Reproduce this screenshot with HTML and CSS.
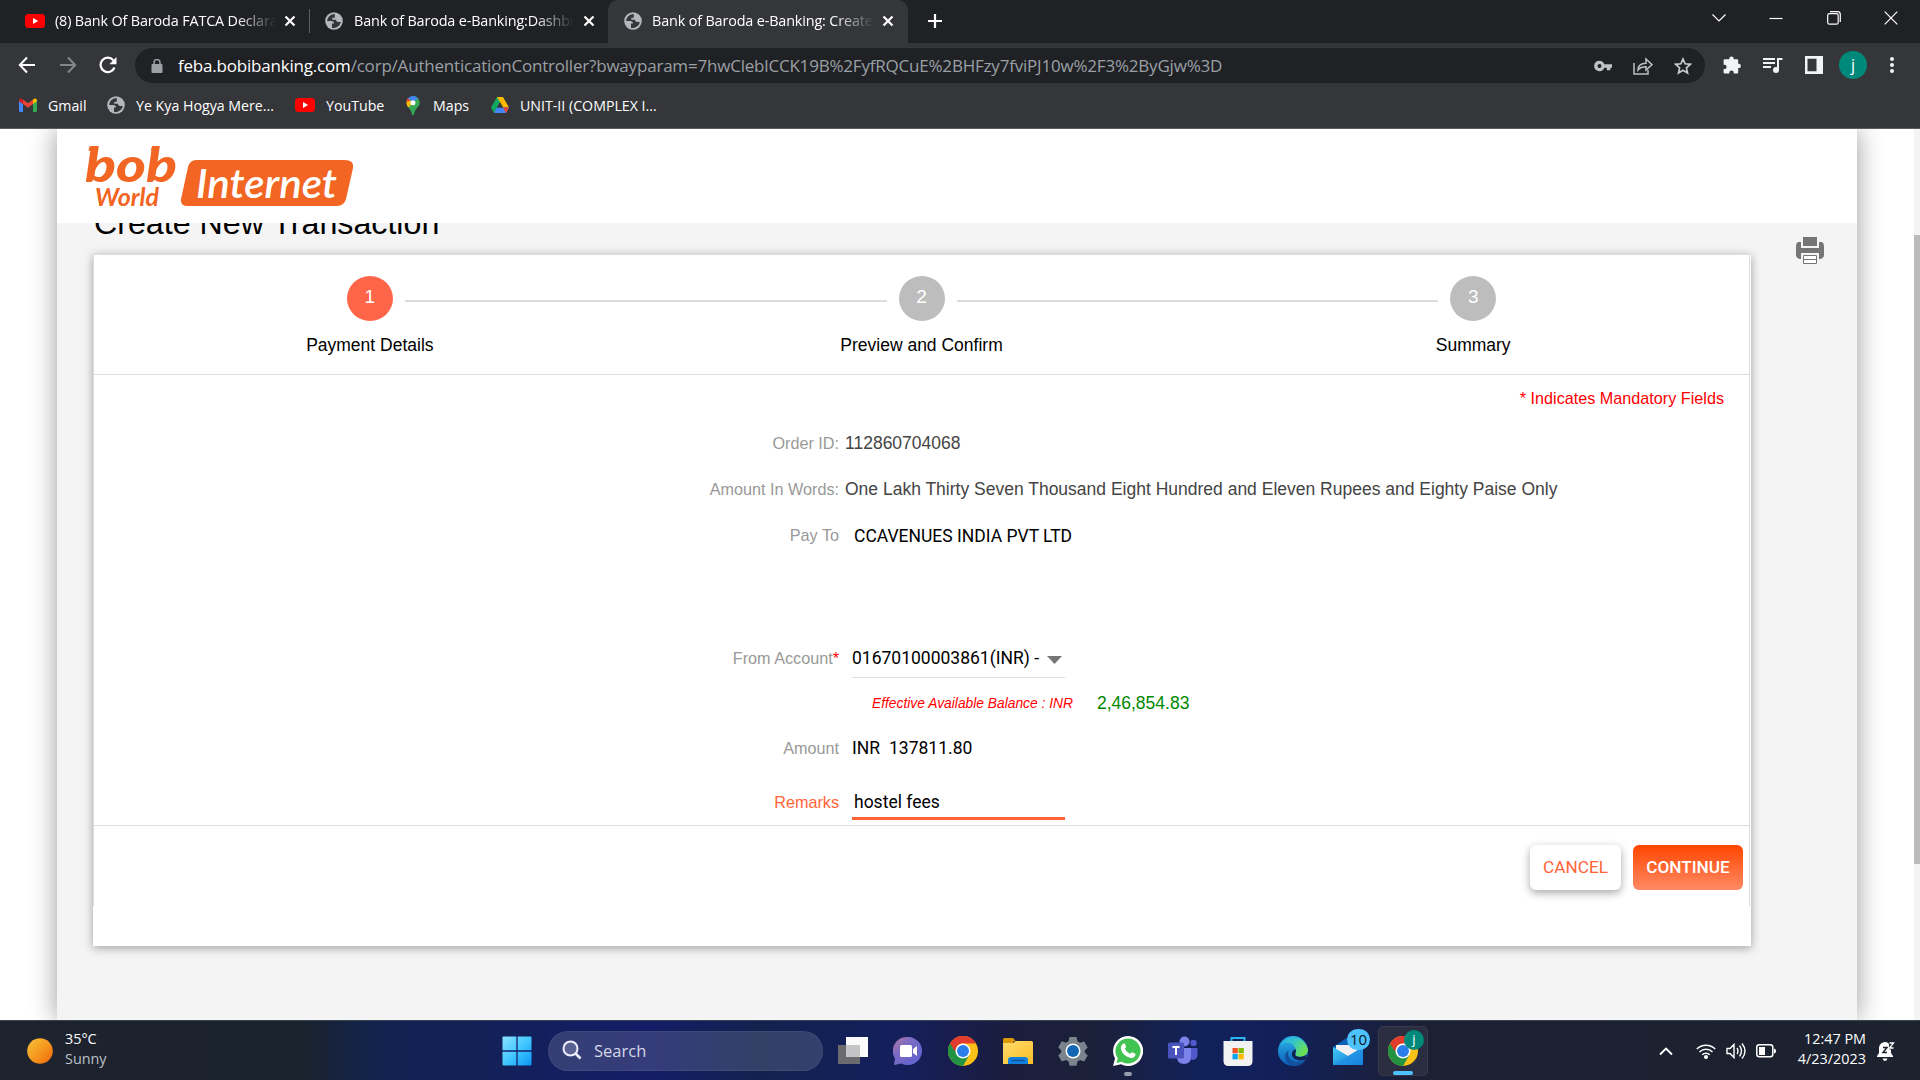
FILE: index.html
```html
<!DOCTYPE html>
<html lang="en">
<head>
<meta charset="utf-8">
<title>Bank of Baroda e-Banking: Create New Transaction</title>
<link rel="stylesheet" href="styles.css">
</head>
<body>
<svg class="defs" width="0" height="0" aria-hidden="true">
  <defs>
    <linearGradient id="sunFill" x1="0" y1="0" x2="1" y2="1"><stop offset="0" stop-color="#f5c33b"/><stop offset=".5" stop-color="#f59a1f"/><stop offset="1" stop-color="#f0640c"/></linearGradient>
    <linearGradient id="winFill" x1="0" y1="0" x2="1" y2="1"><stop offset="0" stop-color="#8ce2ff"/><stop offset=".5" stop-color="#43c8ff"/><stop offset="1" stop-color="#0a94f5"/></linearGradient>
    <linearGradient id="chatFill" x1="0" y1="0" x2="1" y2="1"><stop offset="0" stop-color="#b87a9c"/><stop offset=".35" stop-color="#7d6cc4"/><stop offset="1" stop-color="#5b5fd0"/></linearGradient>
    <linearGradient id="folderFill" x1="0" y1="0" x2="1" y2="1"><stop offset="0" stop-color="#ffdc6b"/><stop offset="1" stop-color="#fcbd28"/></linearGradient>
    <linearGradient id="edgeBlue" x1="0" y1="0" x2="0" y2="1"><stop offset="0" stop-color="#2cb5ea"/><stop offset="1" stop-color="#0c5cb8"/></linearGradient>
    <linearGradient id="edgeGreen" x1="0" y1="0" x2="1" y2=".5"><stop offset="0" stop-color="#2aa9e8"/><stop offset=".5" stop-color="#35c6cb"/><stop offset="1" stop-color="#6be052"/></linearGradient>
    <linearGradient id="mailFill" x1="0" y1="0" x2="1" y2="1"><stop offset="0" stop-color="#41cbf7"/><stop offset="1" stop-color="#1477d4"/></linearGradient>
    <symbol id="globe" viewBox="0 0 18 18"><circle cx="9" cy="9" r="8.800" fill="#b3b8bd"/><path d="M9.800 2c-4 .2-7.400 3-7.600 7h4.300c1.500 0 2.500 1 2.500 2.500h-2v4.400c4 .8 8-1.800 8.800-5.900h-2.600c-1.400 0-2.200-.9-2.200-2.200H7.300V5.700h2.500z" fill="#35363a"/></symbol>
    <symbol id="youtube" viewBox="0 0 20 14"><rect width="20" height="14" rx="3.500" fill="#f00"/><path d="M8 4v6l5.200-3z" fill="#fff"/></symbol>
    <symbol id="close" viewBox="0 0 12 12"><path d="M1.500 1.500l9 9m0-9l-9 9" stroke="#fff" stroke-width="2.200"/></symbol>
    <symbol id="chrome" viewBox="0 0 30 30"><circle cx="15" cy="15" r="15" fill="#fbc116"/><path d="M2 7.500A15 15 0 0 0 15 30l6.500-11.300L15 15z" fill="#229342"/><path d="M2 7.500A15 15 0 0 1 28 7.500H15A7.500 7.500 0 0 0 8.300 11.500L7 16z" fill="#e33b2e"/><path d="M2 7.500l6.300 11 3.200 3-6 2z" fill="#229342"/><circle cx="15" cy="15" r="7.500" fill="#fff"/><circle cx="15" cy="15" r="6" fill="#2b7de9"/></symbol>
  </defs>
</svg>

<header class="browser">
  <div class="tabstrip">
    <div class="tab tab-first"><svg width="20" height="14"><use href="#youtube"/></svg><span class="tab-title">(8) Bank Of Baroda FATCA Declara</span><svg width="12" height="12"><use href="#close"/></svg></div>
    <div class="tab tab-second"><svg width="18" height="18"><use href="#globe"/></svg><span class="tab-title">Bank of Baroda e-Banking:Dashbo</span><svg width="12" height="12"><use href="#close"/></svg></div>
    <div class="tab tab-active"><svg width="18" height="18"><use href="#globe"/></svg><span class="tab-title">Bank of Baroda e-Banking: Create</span><svg width="12" height="12"><use href="#close"/></svg></div>
    <svg class="new-tab" width="16" height="16" viewBox="0 0 16 16"><path d="M8 1v14M1 8h14" stroke="#fff" stroke-width="2.200"/></svg>
    <div class="window-controls">
      <svg width="14" height="14" viewBox="0 0 14 14"><path d="M.5 3.500L7 10l6.500-6.500"/></svg>
      <svg width="14" height="14" viewBox="0 0 14 14"><path d="M.5 7.500h13"/></svg>
      <svg width="14" height="14" viewBox="0 0 14 14"><rect x=".7" y="2.700" width="10.500" height="10.500" rx="1.800"/><path d="M3 .7h7.500a2.800 2.800 0 0 1 2.800 2.800v7.500"/></svg>
      <svg width="14" height="14" viewBox="0 0 14 14"><path d="M.7.700l12.600 12.600m0-12.600L.7 13.300"/></svg>
    </div>
  </div>
  <div class="toolbar">
    <div class="nav">
      <svg width="18" height="18" viewBox="0 0 18 18"><path d="M9 1.500L1.800 9 9 16.500M2 9h15" fill="none" stroke="#fff" stroke-width="2"/></svg>
      <svg width="18" height="18" viewBox="0 0 18 18"><path d="M9 1.500L16.200 9 9 16.500M16 9H1" fill="none" stroke="#84868a" stroke-width="2"/></svg>
      <svg width="18" height="18" viewBox="0 0 18 18"><path d="M15.500 11.500A7.200 7.200 0 1 1 14.300 4.200" fill="none" stroke="#fff" stroke-width="2.200"/><path d="M17.500 1v7.200h-7.200z" fill="#fff"/></svg>
    </div>
    <div class="omnibox">
      <svg width="12" height="14" viewBox="0 0 12 14"><rect x=".5" y="5" width="11" height="9" rx="1" fill="#9aa0a6"/><path d="M3 5.500V3.500a3 3 0 0 1 6 0v2" fill="none" stroke="#9aa0a6" stroke-width="1.500"/></svg>
      <div class="url"><span class="host">feba.bobibanking.com</span><span class="path">/corp/AuthenticationController?bwayparam=7hwCleblCCK19B%2FyfRQCuE%2BHFzy7fviPJ10w%2F3%2ByGjw%3D</span></div>
      <div class="omni-actions">
        <svg width="18" height="12" viewBox="0 0 18 12"><path fill-rule="evenodd" d="M5.500.8a5.200 5.200 0 0 1 4.800 3.400H18v3.600h-1.600v2.400h-3.600V7.800h-2.500A5.200 5.200 0 1 1 5.500.8zm0 3.200a2 2 0 1 0 0 4 2 2 0 0 0 0-4z" fill="#c0c1c3"/></svg>
        <svg width="20" height="18" viewBox="0 0 20 18"><path d="M1 6v11h14v-4" fill="none" stroke="#bdbec0" stroke-width="1.500"/><path d="M5 13c0-4 2.500-6.500 8-6.700V2l6 5.600-6 5.500V9.800C9 9.800 6.800 10.700 5 13z" fill="none" stroke="#bdbec0" stroke-width="1.500"/></svg>
        <svg width="18" height="18" viewBox="0 0 18 18"><path d="M9 2l2.100 4.800 5.200.5-3.900 3.500 1.100 5.100L9 13.200l-4.500 2.700 1.100-5.100-3.900-3.500 5.200-.5z" fill="none" stroke="#c8c9cb" stroke-width="1.700"/></svg>
      </div>
    </div>
    <div class="tool-icons">
      <svg width="18" height="18" viewBox="0 0 18 18"><path d="M6.300 2.800a2.200 2.200 0 0 1 4.400 0v.4h3.500q1 0 1 1v3.500h.5a2.200 2.200 0 0 1 0 4.400h-.5v4.400q0 1-1 1h-3.500v-.8a2.200 2.200 0 0 0-4.400 0v.8H1.600q-1 0-1-1v-3.400h.8a2.200 2.200 0 0 0 0-4.400H.6V4.200q0-1 1-1h4.700z" fill="#f1f3f4"/></svg>
      <svg width="20" height="16" viewBox="0 0 20 16"><path d="M0 2h12M0 6h12M0 10h8" stroke="#f1f3f4" stroke-width="1.800"/><path d="M15 13V2h4.500" fill="none" stroke="#f1f3f4" stroke-width="2"/><circle cx="13" cy="13" r="3" fill="#f1f3f4"/></svg>
      <svg width="18" height="18" viewBox="0 0 18 18"><path fill-rule="evenodd" d="M0 0h18v18H0zM2.500 2.800v12.400h9V2.800z" fill="#f1f3f4"/></svg>
      <span class="avatar">j</span>
      <svg width="4" height="18" viewBox="0 0 4 18"><circle cx="2" cy="3" r="2" fill="#f1f3f4"/><circle cx="2" cy="9" r="2" fill="#f1f3f4"/><circle cx="2" cy="15" r="2" fill="#f1f3f4"/></svg>
    </div>
  </div>
  <nav class="bookmarks">
    <div class="bookmark b1"><svg width="18" height="14" viewBox="0 0 18 14"><path d="M0 2v11q0 1 1 1h3V6z" fill="#4285f4"/><path d="M18 2v11q0 1-1 1h-3V6z" fill="#34a853"/><path d="M0 2Q.5 0 2.500.5L4 1.500V6L0 3.200z" fill="#c5221f"/><path d="M4 1.500l5 3.800 5-3.800V6L9 9.800 4 6z" fill="#ea4335"/><path d="M14 1.500L15.500.5Q17.500 0 18 2v1.200L14 6z" fill="#fbbc04"/></svg><span>Gmail</span></div>
    <div class="bookmark b2"><svg width="18" height="18"><use href="#globe"/></svg><span>Ye Kya Hogya Mere...</span></div>
    <div class="bookmark b3"><svg width="20" height="14"><use href="#youtube"/></svg><span>YouTube</span></div>
    <div class="bookmark b4"><svg width="14" height="19" viewBox="0 0 14 19"><path d="M7 0a6.800 6.800 0 0 1 6.800 6.800C13.800 11 9 12 7.800 19H6.200C5.500 15 4 13.500 2.500 11.500z" fill="#34a853"/><path d="M2.500 11.500L11.800 2A6.800 6.800 0 0 0 1.800 2.500z" fill="#4285f4"/><path d="M1.800 2.500A7 7 0 0 0 2.500 11.500L7 6.800z" fill="#fbbc04"/><path d="M1.900 2.400A7 7 0 0 0 .3 6L4.500 4.500z" fill="#ea4335"/><circle cx="7" cy="6.700" r="2.500" fill="#fff"/></svg><span>Maps</span></div>
    <div class="bookmark b5"><svg width="18" height="16" viewBox="0 0 18 16"><path d="M6 0h6L3 16 0 10.500z" fill="#11a861"/><path d="M6 0h6l6 10.500h-6z" fill="#ffba00"/><path d="M5.800 10.500H18L15 16H3z" fill="#4285f4"/><path d="M12 10.500h6L15 16z" fill="#ea4335"/><path d="M9 5.300l3 5.200H6z" fill="#35363a"/></svg><span>UNIT-II (COMPLEX I...</span></div>
  </nav>
</header>

<main class="viewport">
  <div class="site">
    <div class="site-header">
      <svg class="logo" width="270" height="64" viewBox="0 0 270 64" fill="#f26522">
        <path d="M4.500 1.200h7l-1 4.600h-7zM67 1.200h7l-1 4.600h-7z"/>
        <text x="0" y="36.500" class="logo-bob" textLength="92" lengthAdjust="spacingAndGlyphs">bob</text>
        <text x="10" y="60.500" class="logo-world" textLength="64" lengthAdjust="spacingAndGlyphs">World</text>
        <path d="M111 15h149q9 0 8 8l-7 31q-2 7-9 7H103q-8 0-7-7l7-32q2-7 8-7z"/>
        <text x="111" y="53" class="logo-internet" textLength="141" lengthAdjust="spacingAndGlyphs" fill="#fff">Internet</text>
      </svg>
    </div>
    <h1>Create New Transaction</h1>
    <div class="content">
      <section class="card">
        <div class="panel">
          <ol class="steps">
            <li class="current"><span class="num">1</span><span class="step-label">Payment Details</span></li>
            <li><span class="num">2</span><span class="step-label">Preview and Confirm</span></li>
            <li><span class="num">3</span><span class="step-label">Summary</span></li>
          </ol>
          <form class="form">
            <p class="mandatory">* Indicates Mandatory Fields</p>
            <div class="row"><label>Order ID:</label><span class="value">112860704068</span></div>
            <div class="row"><label>Amount In Words:</label><span class="value">One Lakh Thirty Seven Thousand Eight Hundred and Eleven Rupees and Eighty Paise Only</span></div>
            <div class="row payto"><label>Pay To</label><span class="value field inset">CCAVENUES INDIA PVT LTD</span></div>
            <div class="row account"><label>From Account<i>*</i></label><span class="select field"><span>01670100003861(INR) -</span><svg width="15" height="8" viewBox="0 0 15 8"><path d="M0 0h15L7.500 8z" fill="#757575"/></svg></span></div>
            <div class="row balance"><label></label><span class="balance-label">Effective Available Balance : INR</span><span class="balance-value">2,46,854.83</span></div>
            <div class="row"><label>Amount</label><span class="value field">INR</span><span class="amount">137811.80</span></div>
            <div class="row remarks"><label>Remarks</label><span class="input">hostel fees</span></div>
          </form>
          <div class="actions"><button class="btn cancel" type="button">CANCEL</button><button class="btn continue" type="button">CONTINUE</button></div>
        </div>
      </section>
      <svg class="print" width="30" height="28" viewBox="0 0 30 28"><path d="M8 0h14v9H8zM3 5h3v6h18V5h3q2 1 2 4v9q0 3-4 4h-1v-6H6v6H5q-4-1-4-4V9q0-3 2-4z" fill="#757575"/><path d="M8.500 18.500h13v8h-13zM8.500 22.500h13" fill="#fff" stroke="#757575"/></svg>
    </div>
  </div>
  <div class="scrollbar"><div class="thumb"></div></div>
</main>

<footer class="taskbar">
  <div class="weather"><svg width="26" height="26" viewBox="0 0 26 26"><circle cx="13" cy="13" r="12.800" fill="url(#sunFill)"/></svg><div><span>35°C</span><span class="condition">Sunny</span></div></div>
  <svg class="start" width="30" height="30" viewBox="0 0 30 30" fill="url(#winFill)"><path d="M1.500.500h27q1 0 1 1v27q0 1-1 1h-27q-1 0-1-1v-27q0-1 1-1z"/><path d="M15 0v30M0 15h30" stroke="#14206a" stroke-width="1.300"/></svg>
  <div class="search"><svg width="20" height="20" viewBox="0 0 20 20"><circle cx="8.500" cy="8.500" r="7" fill="#5a6292" stroke="#eef" stroke-width="2"/><path d="M13.500 13.500l5 5" stroke="#eef" stroke-width="2.600"/></svg><span>Search</span></div>
  <div class="apps">
    <div class="app"><svg width="32" height="30" viewBox="0 0 32 30"><rect x="1" y="9" width="22" height="19" fill="#6b6b6e"/><rect x="9" y="1" width="22" height="20" fill="#fafafa"/><rect x="9" y="9" width="14" height="12" fill="#c4c4c6"/></svg></div>
    <div class="app"><svg width="30" height="30" viewBox="0 0 30 30"><path d="M15 1a14 14 0 1 1-6.500 26.400L1 29l1-6.500A14 14 0 0 1 15 1z" fill="url(#chatFill)"/><rect x="7" y="9" width="12" height="12" rx="1.500" fill="#fff"/><path d="M20 13l4-3v10l-4-3z" fill="#fff"/></svg></div>
    <div class="app"><svg width="30" height="30"><use href="#chrome"/></svg></div>
    <div class="app"><svg width="30" height="30" viewBox="0 0 30 30"><path d="M0 3.500q0-1.500 1.500-1.500h8.500l3 3.500h-3V12H0z" fill="#dd9a08"/><path d="M0 7h10l3-2h15.500Q30 5 30 6.500V28H0z" fill="url(#folderFill)"/><path d="M5 28v-4q0-3 3-3h14q3 0 3 3v4z" fill="#1482dc"/><path d="M9 24.500h12" stroke="#0a559e" stroke-width="1.600" stroke-linecap="round"/></svg></div>
    <div class="app"><svg width="30" height="30" viewBox="0 0 30 30"><path d="M11.500 1h7l1 4.300 2.500 1.500 4.200-1.400 3.500 6-3 3.100v1.800l3 3.100-3.500 6-4.200-1.400-2.500 1.500-1 4.300h-7l-1-4.300L8 23.900l-4.200 1.500-3.500-6 3-3.200v-1.800l-3-3.100 3.500-6L8 6.800l2.500-1.500z" fill="#7b848c"/><circle cx="15" cy="15" r="7.500" fill="#fff"/><circle cx="15" cy="15" r="6" fill="#1266b4"/></svg></div>
    <div class="app running"><svg width="30" height="30" viewBox="0 0 30 30"><path d="M15 0a15 15 0 1 1-7 28.200L0 30l2-7.600A15 15 0 0 1 15 0z" fill="#fff"/><path d="M15 2.500A12.500 12.500 0 1 1 8.600 25.700L3.500 27l1.300-4.800A12.500 12.500 0 0 1 15 2.500z" fill="#41c351"/><path d="M10.500 7.500q1-.5 1.500.5l1 2.500q.3.800-1.200 2.300 2 3.800 5.400 5 1.500-1.800 2.200-1.600l2.800 1.500q.7.400.2 1.800-1.300 2.800-4.400 2.600Q10.500 20.800 8 13.500q-.8-4 2.500-6z" fill="#fff"/></svg></div>
    <div class="app"><svg width="30" height="30" viewBox="0 0 30 30"><circle cx="16.500" cy="5.500" r="5" fill="#7b83eb"/><circle cx="25.500" cy="7" r="3.200" fill="#5059c9"/><path d="M20 12h9.500v7q0 5-6 5z" fill="#5059c9"/><path d="M9 12h14v9q0 7-7 7t-7-7z" fill="#7b83eb"/><rect x="0" y="6.500" width="16" height="16" rx="1.500" fill="#4b53bc"/><path d="M4.500 11h7M8 11v8" stroke="#fff" stroke-width="2"/></svg></div>
    <div class="app"><svg width="30" height="30" viewBox="0 0 30 30"><path d="M8.500 7V2h13v5" fill="none" stroke="#2cb4ee" stroke-width="2"/><path d="M.5 5h29v20q0 5-5 5h-19q-5 0-5-5z" fill="#f2f2f2"/><path d="M9.500 12h5.300v5.300H9.500z" fill="#f25022"/><path d="M15.500 12h5.300v5.300h-5.300z" fill="#7fba00"/><path d="M9.500 18h5.300v5.300H9.500z" fill="#00a4ef"/><path d="M15.500 18h5.300v5.300h-5.300z" fill="#ffb900"/></svg></div>
    <div class="app"><svg width="30" height="30" viewBox="0 0 30 30"><circle cx="15" cy="15" r="15" fill="url(#edgeBlue)"/><path d="M1 12C4 5 13 6 16 10c3 3 2 7 1.500 8.500 0 1.500 3 2.500 6 2 4-.5 6.500-3.500 6.500-7A15 15 0 0 0 1 12z" fill="url(#edgeGreen)"/><path d="M11 14c-3 5 1 12 8 12 4 0 7-1 9-3-4 9-17 9-20 1-2-5 0-8 3-10z" fill="#10509c"/><path d="M17.500 13c1 3-1 5 0 6.500 2 2.500 9 1.500 11-1l-.5 4.500c-5 3-13 1-14-4-.5-2.500 1-5 3.500-6z" fill="#14204e"/></svg></div>
    <div class="app"><svg width="30" height="30" viewBox="0 0 30 30"><path d="M0 11L15 1l15 10v8H0z" fill="#0c62b4"/><path d="M3 9h24v11H3z" fill="#f0f0f2"/><path d="M0 11l15 9 15-9v18H0z" fill="url(#mailFill)"/><path d="M0 29l30-18v18z" fill="#1c8ce4" opacity=".6"/></svg><span class="count">10</span></div>
    <div class="app selected"><svg width="30" height="30"><use href="#chrome"/></svg><span class="profile">j</span></div>
  </div>
  <div class="tray">
    <svg width="14" height="10" viewBox="0 0 14 10"><path d="M1 8.500l6-6 6 6" fill="none" stroke="#fff" stroke-width="1.800"/></svg>
    <svg width="20" height="16" viewBox="0 0 20 16" fill="none" stroke="#fff" stroke-width="1.500"><path d="M.8 6a13 13 0 0 1 18.400 0M3.500 9a9.200 9.200 0 0 1 13 0M6.200 11.700a5.400 5.400 0 0 1 7.600 0"/><circle cx="10" cy="14" r="1.300" fill="#fff"/></svg>
    <svg width="20" height="18" viewBox="0 0 20 18" fill="none" stroke="#fff" stroke-width="1.400"><path d="M1 6.500v5h3l4 4v-13l-4 4zM11 6q2 3 0 6M13.500 3.700q4 5.300 0 10.600M16 1.500q6 7.500 0 15"/></svg>
    <svg width="20" height="14" viewBox="0 0 20 14"><rect x=".8" y=".8" width="16" height="12" rx="2.500" fill="none" stroke="#fff" stroke-width="1.500"/><path d="M3 3h6v8H3zM18 4.500q2 0 2 2.500t-2 2.500z" fill="#fff"/></svg>
    <div class="clock"><span>12:47 PM</span><span>4/23/2023</span></div>
    <svg width="18" height="20" viewBox="0 0 18 20"><path d="M8 1a6 6 0 0 1 6 6v5l2 3v1H0v-1l2-3V7a6 6 0 0 1 6-6zM5.500 17.500h5Q9.500 20 8 20t-2.500-2.500z" fill="#fff"/><path d="M6 6.500h4l-4 5h4" fill="none" stroke="#1d232d" stroke-width="1.500"/><path d="M11.500.5h6v8h-5z" fill="#1d232d"/><path d="M12.500 2h4l-4 5h4" fill="none" stroke="#fff" stroke-width="1.300"/></svg>
  </div>
</footer>
</body>
</html>
```
FILE: styles.css
```css
* { box-sizing: border-box; }
body { margin: 0; width: 1920px; height: 1080px; overflow: hidden; font-family: "Liberation Sans", Arial, sans-serif; display: flex; flex-direction: column; }
svg { flex: none; display: block; }
.defs { position: absolute; }
p, h1, ol { margin: 0; padding: 0; }

/* Browser chrome */
.browser { height: 129px; background: #35363a; border-bottom: 1px solid #5a5b5e; color: #fff; font-family: "Open Sans", "Noto Sans", sans-serif; }
.tabstrip { height: 43px; background: #202124; display: flex; align-items: center; }
.tab { height: 43px; display: flex; align-items: center; font-size: 14.400px; letter-spacing: -.15px; padding-bottom: 2px; }
.tab-title { overflow: hidden; white-space: nowrap; width: 222px; margin-right: -2px; mask-image: linear-gradient(90deg, #000 82%, transparent); }
.tab-first { width: 310px; padding-left: 25px; gap: 10px; }
.tab-first::after { content: ""; width: 1px; height: 24px; background: #5a5c60; margin-left: 3px; }
.tab-second { width: 298px; padding-left: 15px; gap: 11px; }
.tab-second .tab-title { width: 220px; }
.tab-active { width: 300px; padding-left: 16px; gap: 10px; background: #35363a; border-radius: 10px 10px 0 0; }
.new-tab { margin-left: 19px; margin-bottom: 1px; }
.window-controls { margin-left: auto; padding-right: 22px; display: flex; gap: 43.500px; margin-bottom: 7px; }
.window-controls path, .window-controls rect { fill: none; stroke: #fff; stroke-width: 1.200; }
.toolbar { height: 44px; display: flex; align-items: center; }
.nav { width: 135px; padding-left: 18px; display: flex; gap: 22.500px; }
.omnibox { width: 1570px; height: 35px; border-radius: 18px; background: #202124; display: flex; align-items: center; padding: 0 13px 0 16px; margin-top: 1px; }
.url { font-size: 17px; letter-spacing: -.2px; margin-left: 15px; white-space: nowrap; line-height: 30px; }
.path { color: #9aa0a6; }
.omni-actions { margin-left: auto; display: flex; align-items: center; gap: 21px; }
.tool-icons { flex: 1; display: flex; align-items: center; padding-left: 18px; }
.tool-icons svg { margin-right: 22px; }
.avatar { width: 28px; height: 28px; border-radius: 50%; background: #00897b; display: flex; align-items: center; justify-content: center; font-size: 16px; margin-right: 23px; margin-left: -6px; line-height: 1; }
.tool-icons .avatar + svg { margin-right: 0; }
.bookmarks { height: 37px; display: flex; font-size: 14.200px; padding-bottom: 1px; }
.bookmark { display: flex; align-items: center; white-space: nowrap; }
.bookmark svg { margin-right: 11px; }
.b1 { width: 88px; margin-left: 19px; }
.b2 { width: 188px; }
.b3 { width: 111px; }
.b4 { width: 85px; }
.b4 svg { margin-right: 13px; }

/* Page */
.viewport { height: 891px; background: #fff; display: flex; justify-content: space-between; padding-left: 57px; overflow: hidden; }
.site { width: 1800px; height: 891px; background: #f4f4f4; box-shadow: 0 0 25px rgba(0,0,0,.4); clip-path: inset(0 -40px); }
.site-header { position: relative; z-index: 1; height: 94px; background: #fff; padding: 16px 0 0 28px; }
.logo-bob { font: italic 900 47px Lato, sans-serif; }
.logo-world { font: italic 700 24px Lato, sans-serif; }
.logo-internet { font: italic 600 41px Lato, sans-serif; }
h1 { font-size: 32.200px; font-weight: 400; line-height: 38px; height: 31px; margin: -19px 0 0 37px; }
.content { display: flex; padding-left: 36px; margin-top: 19px; }
.card { width: 1658px; height: 692px; background: #fff; box-shadow: 0 2px 9px rgba(0,0,0,.35); }
.panel { width: 1657px; height: 652px; border: 1px solid #ddd; border-bottom: 0; }
.print { margin: -17px 0 0 44px; }
.steps { height: 120px; display: flex; justify-content: space-between; list-style: none; padding: 21px 0 0; border-bottom: 1px solid #ddd; }
.steps li { flex: 1; display: flex; flex-direction: column; align-items: center; position: relative; }
.steps li + li::before { content: ""; position: absolute; height: 2px; top: 24px; right: calc(50% + 35px); left: calc(-50% + 35px); background: #ddd; }
.num { width: 46px; height: 45px; border-radius: 50%; background: #bdbdbd; color: #fff; font-size: 19px; line-height: 42px; text-align: center; }
.current .num { background: #ff6549; }
.step-label { margin-top: 12px; font-size: 17.500px; line-height: 24px; }
.form { height: 451px; border-bottom: 1px solid #ddd; }
.mandatory { text-align: right; color: #f00; font-size: 16.200px; padding-right: 25px; height: 45px; line-height: 46px; }
.row { height: 46px; display: flex; align-items: center; font-size: 17.500px; color: #444; white-space: nowrap; }
.row label { width: 745px; text-align: right; color: #999; font-size: 16.200px; margin-right: 6px; }
.row label i { color: #f00; font-style: normal; }
.field { font-family: Roboto, sans-serif; color: #000; margin-left: 7px; }
.inset { margin-left: 9px; }
.payto { height: 47px; }
.account { height: 76px; padding-top: 17px; margin-top: 53px; }
.select { width: 213px; height: 38px; border-bottom: 1px solid #ddd; display: flex; align-items: center; justify-content: space-between; padding-right: 3px; }
.select svg { margin-top: 4px; }
.balance { height: 30px; margin-bottom: 7px; }
.balance-label { color: #f00; font-style: italic; font-size: 13.800px; margin-left: 27px; }
.balance-value { color: #080; margin-left: 24px; }
.amount { font-family: Roboto, sans-serif; color: #000; margin-left: 9px; }
.remarks { height: 50px; padding-top: 12px; }
.row.remarks label { color: #ff6437; }
.input { width: 213px; height: 36px; border-bottom: 3px solid #ff6437; margin-left: 7px; padding: 2px 0 0 2px; color: #000; font-family: Roboto, sans-serif; display: flex; align-items: center; }
.actions { display: flex; justify-content: flex-end; gap: 12px; padding: 19px 6px 0 0; }
.btn { height: 45px; border: 0; border-radius: 6px; font: 500 17.200px Roboto, sans-serif; padding: 0 0 2px; }
.cancel { width: 91px; background: #fff; color: #ff6437; box-shadow: 0 3px 8px rgba(0,0,0,.35); font-weight: 400; }
.continue { width: 110px; color: #fff; background: linear-gradient(#ff4500, #ff8a65); }
.scrollbar { width: 6px; background: #f4f4f4; padding-top: 106px; }
.thumb { height: 629px; background: #bbb; }

/* Taskbar */
.taskbar { height: 60px; border-top: 1px solid #374553; display: flex; align-items: center; color: #fff; font-family: "Open Sans", "Noto Sans", sans-serif; background: linear-gradient(90deg, #1e232e 0, #1b232d 300px, #122350 380px, #141d66 650px, #12224f 760px, #141f5c 900px, #1b1d40 1000px, #1c2038 1090px, #11215a 1200px, #12205a 1280px, #1c2033 1430px, #1c222e 100%); }
.weather { width: 502px; padding-left: 27px; display: flex; align-items: center; gap: 12px; font-size: 14.400px; line-height: 20px; }
.weather div, .clock { display: flex; flex-direction: column; padding-bottom: 3px; }
.condition { color: #bbc0c8; }
.search { width: 275px; height: 40px; border-radius: 20px; margin-left: 16px; background: rgba(255,255,255,.14); border: 1px solid rgba(255,255,255,.06); display: flex; align-items: center; padding: 0 0 1px 13px; gap: 12px; font-size: 16.500px; color: #d5d8e6; }
.apps { display: flex; margin-left: 5px; gap: 5px; }
.app { width: 50px; height: 50px; border-radius: 5px; display: flex; align-items: center; justify-content: center; position: relative; }
.running::after, .selected::after { content: ""; position: absolute; bottom: 0; left: 21px; width: 8px; height: 4px; border-radius: 2px; background: #989cac; }
.selected { background: #2b2e40; border: 1px solid #37394a; }
.selected::after { width: 20px; left: 14px; background: #4cc2ff; }
.count, .profile { position: absolute; display: flex; align-items: center; justify-content: center; border-radius: 11px; line-height: 1; }
.count { right: 3px; top: 3px; width: 23px; height: 21px; background: #4cc2ff; color: #101820; font-size: 15px; }
.profile { right: 3px; top: 3px; width: 20px; height: 20px; background: #00897b; font-size: 13px; }
.tray { margin-left: auto; padding-right: 25px; display: flex; align-items: center; }
.tray > svg { margin-right: 10px; }
.tray > svg:first-child { margin-right: 23px; }
.tray > svg:last-child { margin-right: 0; }
.clock { align-items: flex-end; font-size: 14.400px; line-height: 20px; width: 80px; margin-right: 11px; }
```
